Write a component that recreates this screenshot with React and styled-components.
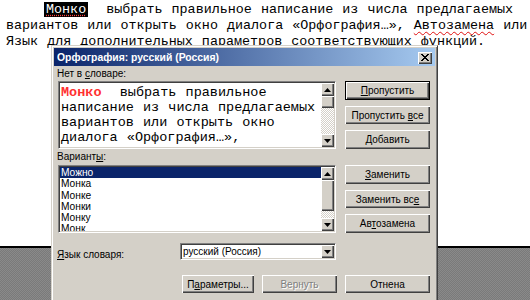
import React from "react";
import styled, { createGlobalStyle, css } from "styled-components";

const Global = createGlobalStyle`
  html, body { margin: 0; padding: 0; background: #fff; }
  body { width: 530px; height: 300px; overflow: hidden; }
`;

const Screen = styled.div`
  position: relative;
  width: 530px;
  height: 300px;
  overflow: hidden;
  display: flex;
  flex-direction: column;
  background: #fff;
`;

const Page = styled.div`
  flex: none;
  height: 246px;
  box-sizing: border-box;
  padding: 2px 0 0 6px;
  font-family: "Liberation Mono", "Courier New", monospace;
  font-size: 13.4px;
  line-height: 16px;
  color: #000;
  word-spacing: 1px;
  white-space: pre;
`;

const Line = styled.div`
  padding-left: ${(p) => p.$indent || 0}px;
`;

const Highlight = styled.span`
  background: #000;
  color: #fff;
  padding: 0 2px;
  text-decoration: underline dotted #ff4040;
  text-underline-offset: 2px;
`;

const Misspelled = styled.span`
  text-decoration: underline wavy #e01010;
  text-decoration-thickness: 1px;
  text-underline-offset: 2px;
`;

const PageEdge = styled.div`
  flex: none;
  height: 2px;
  background: #000;
`;

const Desk = styled.div`
  flex: 1;
  background: repeating-conic-gradient(#7a7a7a 0 25%, #8a8a8a 0 50%) 0 0 / 2px 2px;
`;

/* ---------- Dialog ---------- */

const Window = styled.div`
  position: absolute;
  left: 51px;
  top: 45px;
  width: 387px;
  height: 262px;
  box-sizing: border-box;
  background: #d4d0c8;
  border: 1px solid;
  border-color: #d4d0c8 #404040 #404040 #d4d0c8;
  box-shadow: inset 1px 1px #fff, inset -1px -1px #808080;
  padding: 2px;
  font-family: "Liberation Sans", Arial, sans-serif;
  font-size: 10px;
  color: #000;
`;

const TitleBar = styled.div`
  height: 18px;
  display: flex;
  align-items: center;
  justify-content: space-between;
  padding: 0 3px 0 3px;
  background: linear-gradient(to right, #0a246a, #a6caf0);
`;

const TitleText = styled.span`
  color: #fff;
  font-weight: bold;
  font-size: 10.4px;
`;

const raised = css`
  background: #d4d0c8;
  box-shadow: inset 1px 1px #fff, inset -1px -1px #404040, inset -2px -2px #808080;
`;

const sunken = css`
  box-sizing: border-box;
  border: 1px solid;
  border-color: #808080 #fff #fff #808080;
  box-shadow: inset 1px 1px #404040, inset -1px -1px #d4d0c8;
  background: #fff;
  padding: 1px;
`;

const CloseButton = styled.div`
  ${raised};
  width: 14px;
  height: 12px;
  display: flex;
  align-items: center;
  justify-content: center;
  margin-top: 1px;
`;

const Body = styled.div`
  display: grid;
  grid-template-columns: 278px 85px;
  grid-template-rows: 15px 68px 16px 68px auto auto;
  column-gap: 9px;
  padding: 0 5px 0 4px;
`;

const Label = styled.div`
  grid-column: 1 / -1;
  line-height: ${(p) => p.$h || 15}px;
  margin-left: -1px;
`;

const Field = styled.div`
  ${sunken};
  display: flex;
  overflow: hidden;
`;

const Mono = styled.div`
  flex: 1;
  padding: 2px 0 0 1px;
  font-family: "Liberation Mono", "Courier New", monospace;
  font-size: 13.5px;
  line-height: 15px;
  white-space: pre;
  word-spacing: 1px;
  overflow: hidden;
`;

const Wrong = styled.span`
  color: #ff3030;
  font-weight: bold;
`;

const ScrollBar = styled.div`
  width: 13px;
  flex: none;
  display: flex;
  flex-direction: column;
`;

const ArrowButton = styled.div`
  ${raised};
  flex: none;
  height: 13px;
  display: flex;
  align-items: center;
  justify-content: center;
`;

const Thumb = styled.div`
  ${raised};
  flex: none;
  height: ${(p) => p.$h}px;
`;

const Track = styled.div`
  flex: 1;
  background: repeating-conic-gradient(#fff 0 25%, #d4d0c8 0 50%) 0 0 / 2px 2px;
`;

const Stack = styled.div`
  display: flex;
  flex-direction: column;
  gap: 6px;
`;

const Button = styled.div`
  ${raised};
  box-sizing: border-box;
  height: ${(p) => p.$h || 19}px;
  width: ${(p) => p.$w || 85}px;
  display: flex;
  align-items: center;
  justify-content: center;
  color: ${(p) => (p.$disabled ? "#808080" : "#000")};
  text-shadow: ${(p) => (p.$disabled ? "1px 1px #fff" : "none")};
  ${(p) =>
    p.$default &&
    css`
      border: 1px solid #000;
    `}
  u { text-underline-offset: 1px; }
`;

const Items = styled.div`
  flex: 1;
  overflow: hidden;
`;

const Item = styled.div`
  height: 11.3px;
  line-height: 11.3px;
  padding-left: 1px;
  font-size: 10.2px;
  background: ${(p) => (p.$selected ? "#0a246a" : "transparent")};
  color: ${(p) => (p.$selected ? "#fff" : "#000")};
`;

const LangRow = styled.div`
  grid-column: 1 / -1;
  display: flex;
  align-items: center;
  margin-top: 10px;
`;

const LangLabel = styled.div`
  width: 123px;
  margin-left: -1px;
  padding-top: 5px;
`;

const Select = styled.div`
  ${sunken};
  width: 156px;
  height: 17px;
  display: flex;
  align-items: center;
`;

const SelectText = styled.div`
  flex: 1;
  padding-left: 1px;
`;

const SelectButton = styled.div`
  ${raised};
  width: 13px;
  height: 13px;
  display: flex;
  align-items: center;
  justify-content: center;
`;

const Footer = styled.div`
  grid-column: 1 / -1;
  display: flex;
  justify-content: flex-end;
  gap: 8px;
  margin-top: 15px;
`;

const Arrow = ({ down }) => (
  <svg width="7" height="4" viewBox="0 0 7 4" style={{ display: "block" }}>
    <polygon points={down ? "0,0 7,0 3.5,4" : "3.5,0 7,4 0,4"} fill="#000" />
  </svg>
);

const CloseGlyph = () => (
  <svg width="8" height="7" viewBox="0 0 8 7" style={{ display: "block" }}>
    <path
      d="M0 0h2v1H0zM6 0h2v1H6zM1 1h2v1H1zM5 1h2v1H5zM2 2h4v1H2zM3 3h2v1H3zM2 4h4v1H2zM1 5h2v1H1zM5 5h2v1H5zM0 6h2v1H0zM6 6h2v1H6z"
      fill="#000"
    />
  </svg>
);

const VScroll = ({ thumb }) => (
  <ScrollBar>
    <ArrowButton>
      <Arrow />
    </ArrowButton>
    <Thumb $h={thumb} />
    <Track />
    <ArrowButton>
      <Arrow down />
    </ArrowButton>
  </ScrollBar>
);

const variants = ["Можно", "Монка", "Монке", "Монки", "Монку", "Монк"];

export default function App() {
  return (
    <>
      <Global />
      <Screen>
        <Page>
          <Line $indent={38}>
            <Highlight>Монко</Highlight>
            {"  выбрать правильное написание из числа предлагаемых"}
          </Line>
          <Line>
            {"вариантов или открыть окно диалога «Орфография…», "}
            <Misspelled>Автозамена</Misspelled>
            {" или"}
          </Line>
          <Line>Язык для дополнительных параметров соответствующих функций.</Line>
        </Page>
        <PageEdge />
        <Desk />

        <Window>
          <TitleBar>
            <TitleText>Орфография: русский (Россия)</TitleText>
            <CloseButton>
              <CloseGlyph />
            </CloseButton>
          </TitleBar>
          <Body>
            <Label>
              Нет в <u>с</u>ловаре:
            </Label>
            <Field>
              <Mono>
                <Wrong>Монко</Wrong>
                {"  выбрать правильное\nнаписание из числа предлагаемых\nвариантов или открыть окно\nдиалога «Орфография…»,"}
              </Mono>
              <VScroll thumb={12} />
            </Field>
            <Stack>
              <Button $default>
                <span>
                  <u>П</u>ропустить
                </span>
              </Button>
              <Button>
                <span>
                  Пропустить <u>в</u>се
                </span>
              </Button>
              <Button>
                <span>
                  <u>Д</u>обавить
                </span>
              </Button>
            </Stack>

            <Label $h={16}>
              Вариант<u>ы</u>:
            </Label>
            <Field>
              <Items>
                {variants.map((v, i) => (
                  <Item key={v} $selected={i === 0}>
                    {v}
                  </Item>
                ))}
              </Items>
              <VScroll thumb={31} />
            </Field>
            <Stack>
              <Button>
                <span>
                  <u>З</u>аменить
                </span>
              </Button>
              <Button>
                <span>
                  Заменить вс<u>е</u>
                </span>
              </Button>
              <Button>
                <span>
                  Ав<u>т</u>озамена
                </span>
              </Button>
            </Stack>

            <LangRow>
              <LangLabel>
                <u>Я</u>зык словаря:
              </LangLabel>
              <Select>
                <SelectText>русский (Россия)</SelectText>
                <SelectButton>
                  <Arrow down />
                </SelectButton>
              </Select>
            </LangRow>

            <Footer>
              <Button $w={72} $h={18}>
                <span>
                  П<u>а</u>раметры...
                </span>
              </Button>
              <Button $w={75} $h={18} $disabled>
                Вернуть
              </Button>
              <Button $w={85} $h={18}>
                Отнена
              </Button>
            </Footer>
          </Body>
        </Window>
      </Screen>
    </>
  );
}
